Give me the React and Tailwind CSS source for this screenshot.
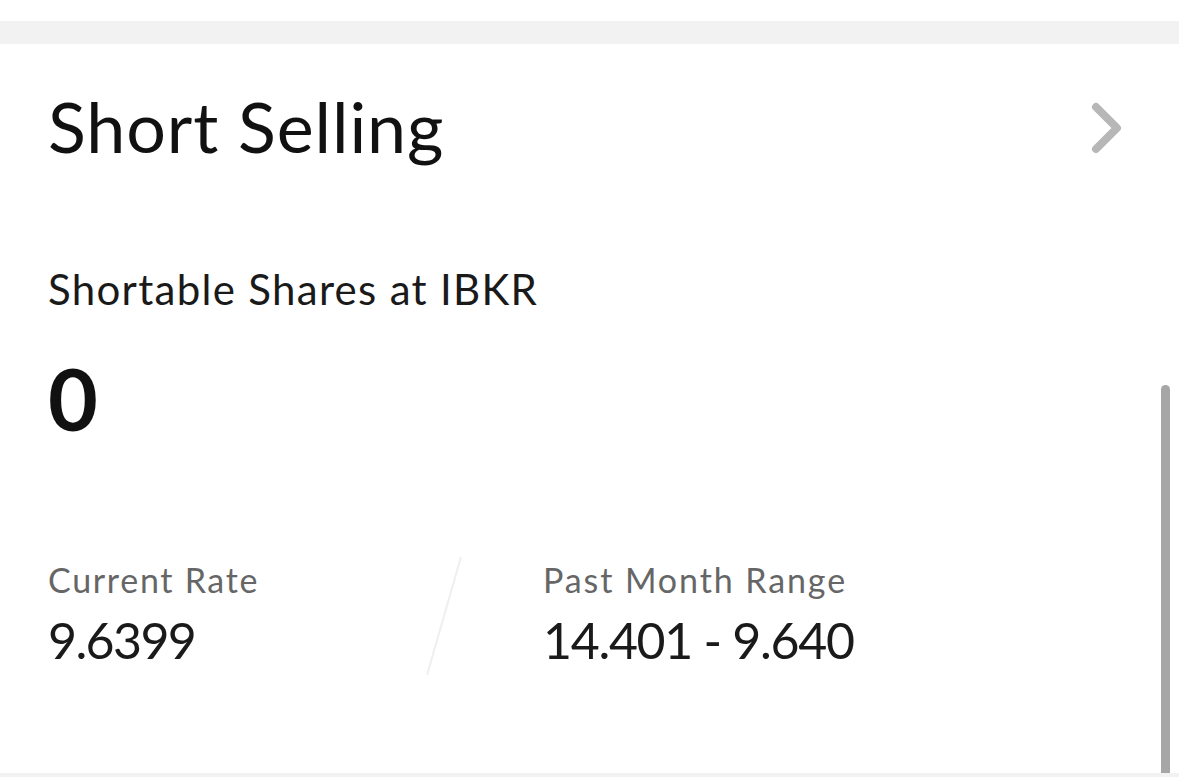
export default function App() {
  return (
    <div className="w-[1179px] h-[777px] bg-white flex flex-col overflow-hidden" style={{ fontFamily: "Lato, 'Noto Sans', sans-serif" }}>
      <div className="h-[21px] bg-white" />
      <div className="h-[23px] bg-[#f2f2f2]" />
      <div className="relative flex-1 bg-white pl-[48px]">
        <div className="mt-[47px] flex items-start justify-between">
          <h1 className="text-[70px] leading-none text-[#111111] font-normal tracking-[0.9px]">Short Selling</h1>
          <svg className="mr-[53px] mt-[7px]" width="40" height="60" viewBox="0 0 40 60" fill="none">
            <polyline points="10,9 31,30 10,51" stroke="#b7b7b7" strokeWidth="8" strokeLinecap="round" strokeLinejoin="round" />
          </svg>
        </div>
        <div className="mt-[107px] text-[42px] leading-none text-[#1a1a1a] tracking-[1.3px]">Shortable Shares at IBKR</div>
        <div className="mt-[45px] text-[86px] leading-none font-bold text-[#111111] tracking-[-1px]">0</div>
        <div className="mt-[116px] flex items-start">
          <div className="w-[372px]">
            <div className="mt-[6px] text-[34px] leading-none text-[#666666] tracking-[1.7px]">Current Rate</div>
            <div className="mt-[18px] text-[50px] leading-none text-[#1a1a1a] tracking-[-1.6px]">9.6399</div>
          </div>
          <svg width="50" height="120" viewBox="0 0 50 120" fill="none">
            <line x1="41" y1="0" x2="7" y2="118" stroke="#efefef" strokeWidth="2" />
          </svg>
          <div className="ml-[73px]">
            <div className="mt-[6px] text-[34px] leading-none text-[#666666] tracking-[1.9px]">Past Month Range</div>
            <div className="mt-[18px] text-[50px] leading-none text-[#1a1a1a] tracking-[-1.3px]">14.401 - 9.640</div>
          </div>
        </div>
        <div className="absolute right-[9px] top-[341px] bottom-0 w-[9px] rounded-t-full bg-[#a6a6a6]" />
      </div>
      <div className="h-[4px] bg-[#f2f2f2]" />
    </div>
  );
}
